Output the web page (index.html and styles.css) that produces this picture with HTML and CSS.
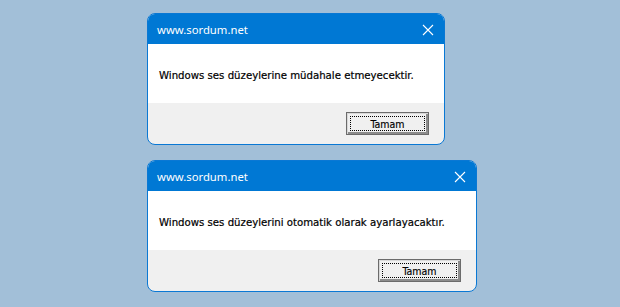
FILE: index.html
```html
<!DOCTYPE html>
<html>
<head>
<meta charset="utf-8">
<link rel="stylesheet" href="styles.css">
</head>
<body>
<div class="stack">
  <div class="dialog d1">
    <div class="titlebar">
      <span class="title">www.sordum.net</span>
      <svg class="close" width="12" height="12" viewBox="0 0 12 12"><path d="M1 1L11 11M11 1L1 11" stroke="#fff" stroke-width="1.1" fill="none"/></svg>
    </div>
    <div class="body"><span class="msg">Windows ses düzeylerine müdahale etmeyecektir.</span></div>
    <div class="footer"><button class="btn"><span class="focus">Tamam</span></button></div>
  </div>
  <div class="dialog d2">
    <div class="titlebar">
      <span class="title">www.sordum.net</span>
      <svg class="close" width="12" height="12" viewBox="0 0 12 12"><path d="M1 1L11 11M11 1L1 11" stroke="#fff" stroke-width="1.1" fill="none"/></svg>
    </div>
    <div class="body"><span class="msg">Windows ses düzeylerini otomatik olarak ayarlayacaktır.</span></div>
    <div class="footer"><button class="btn"><span class="focus">Tamam</span></button></div>
  </div>
</div>
</body>
</html>
```
FILE: styles.css
```css
html, body { margin: 0; padding: 0; }
body {
  background: #a2bfd8;
  width: 620px;
  height: 307px;
  overflow: hidden;
}
.stack {
  display: flex;
  flex-direction: column;
  gap: 15px;
  padding: 13px 0 0 147px;
}
.dialog {
  box-sizing: border-box;
  height: 132px;
  border: 1px solid #0a78d4;
  border-radius: 8px;
  overflow: hidden;
  display: flex;
  flex-direction: column;
  background: #f0f0f0;
}
.d1 { width: 298px; }
.d2 { width: 330px; }
.titlebar {
  height: 30px;
  background: #0078d4;
  display: flex;
  align-items: center;
  justify-content: space-between;
  padding: 0 10px 0 9px;
}
.title {
  color: #fff;
  font-family: "Noto Sans", "Open Sans", sans-serif;
  font-size: 11.3px;
  margin-top: 1px;
}
.close { display: block; margin-top: 2px; }
.body {
  height: 59px;
  background: #fff;
  display: flex;
  align-items: center;
  padding-left: 11px;
}
.msg {
  font-family: "DejaVu Sans Condensed", "DejaVu Sans", sans-serif;
  font-stretch: condensed;
  font-size: 11.3px;
  color: #000;
  -webkit-text-stroke: 0.2px #000;
  margin-top: 3px;
}
.footer {
  flex: 1;
  display: flex;
  justify-content: flex-end;
  align-items: flex-start;
  padding: 9px 15px 0 0;
}
.btn {
  box-sizing: border-box;
  width: 83px;
  height: 23px;
  border: 1px solid #6b6b6b;
  background: #f0f0f0;
  box-shadow: inset 1px 1px 0 #d8d8d8, inset -2px -2px 0 #8c8c8c;
  padding: 3px;
  margin: 0;
  display: flex;
}
.focus {
  flex: 1;
  border: 1px dotted #000;
  display: flex;
  align-items: center;
  justify-content: center;
  font-family: "DejaVu Sans Condensed", "DejaVu Sans", sans-serif;
  font-stretch: condensed;
  font-size: 10.5px;
  color: #000;
  -webkit-text-stroke: 0.15px #000;
}
```
